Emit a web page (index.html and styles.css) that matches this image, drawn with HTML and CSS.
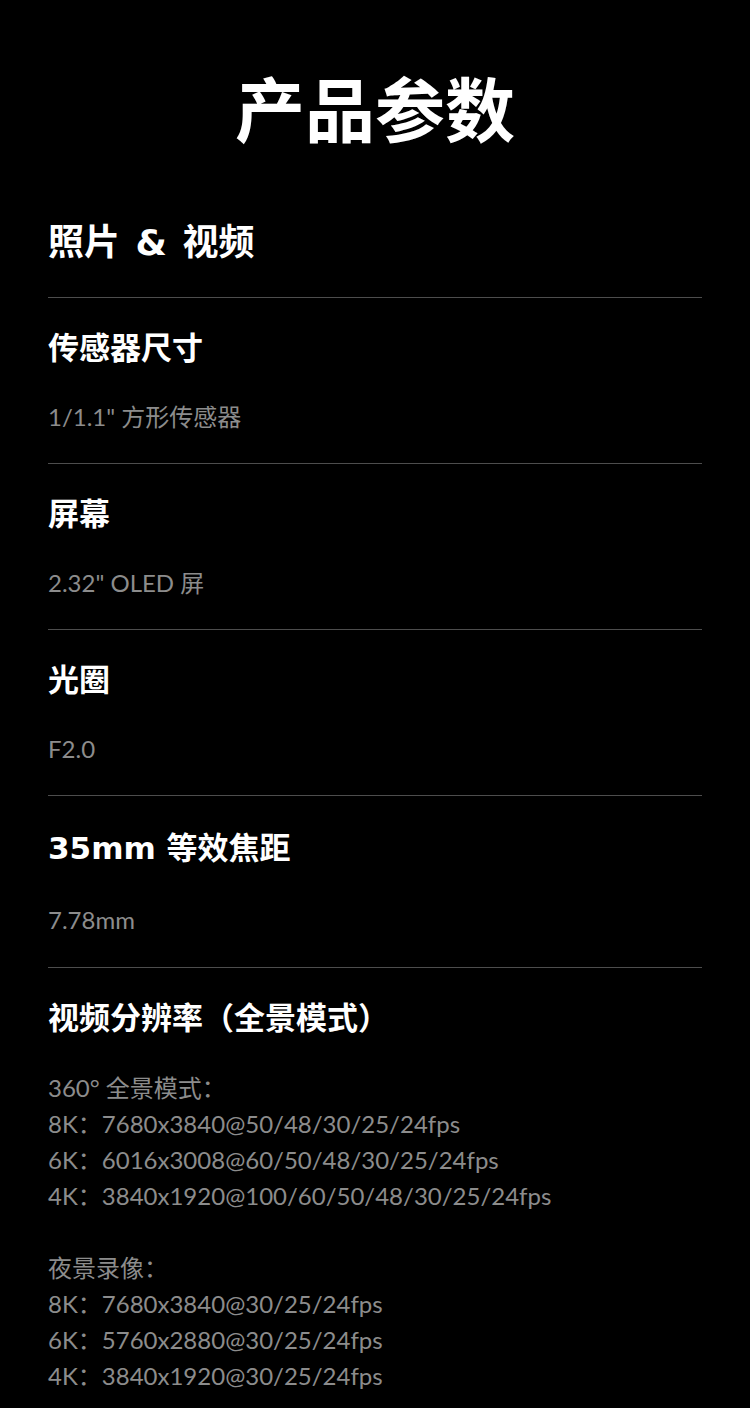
FILE: index.html
```html
<!DOCTYPE html>
<html lang="zh-CN">

<head>
  <meta charset="UTF-8">
  <meta name="viewport" content="width=device-width, initial-scale=1.0">
  <title>产品参数</title>
  <link rel="stylesheet" href="styles.css">
</head>

<body>
  <h1 class="page-title">产品参数</h1>

  <div class="specs">
    <h2 class="group-title">照片 &amp; 视频</h2>

    <div class="spec">
      <h3 class="spec-name">传感器尺寸</h3>
      <p class="spec-value">1/1.1" 方形传感器</p>
    </div>

    <div class="spec">
      <h3 class="spec-name">屏幕</h3>
      <p class="spec-value">2.32" OLED 屏</p>
    </div>

    <div class="spec">
      <h3 class="spec-name">光圈</h3>
      <p class="spec-value">F2.0</p>
    </div>

    <div class="spec spec-wide">
      <h3 class="spec-name">35mm 等效焦距</h3>
      <p class="spec-value">7.78mm</p>
    </div>

    <div class="spec spec-last">
      <h3 class="spec-name">视频分辨率（全景模式）</h3>
      <div class="spec-list">
        <p>360° 全景模式：</p>
        <p>8K：7680x3840@50/48/30/25/24fps</p>
        <p>6K：6016x3008@60/50/48/30/25/24fps</p>
        <p>4K：3840x1920@100/60/50/48/30/25/24fps</p>
      </div>
      <div class="spec-list">
        <p>夜景录像：</p>
        <p>8K：7680x3840@30/25/24fps</p>
        <p>6K：5760x2880@30/25/24fps</p>
        <p>4K：3840x1920@30/25/24fps</p>
      </div>
    </div>
  </div>
</body>

</html>
```

FILE: styles.css
```css
/* page */
body {
  margin: 0;
  padding: 0 48px;
  background-color: #000000;
  color: #ffffff;
  font-family: Lato, "Noto Sans CJK SC", sans-serif;
}

.page-title {
  margin: 60px 0 0;
  font-size: 70px;
  line-height: 100px;
  font-weight: 700;
  text-align: center;
}

.group-title,
.spec-name {
  font-family: "DejaVu Sans", "Noto Sans CJK SC", sans-serif;
  font-weight: 700;
}

.group-title {
  margin: 58px 0 0;
  font-size: 36px;
  line-height: 50px;
  word-spacing: 3px;
  padding-bottom: 29px;
}

.spec {
  border-top: 1px solid #4d4d4d;
  padding: 30px 0 31px;
}

.spec-name {
  margin: 0 0 34px;
  font-size: 31px;
  line-height: 40px;
}

.spec-wide {
  padding-top: 32px;
  padding-bottom: 32px;
}

.spec-wide .spec-name {
  margin-bottom: 37px;
}

.spec-value {
  margin: 0;
  font-size: 24px;
  line-height: 30px;
  color: #8c8c8c;
}

.spec-last .spec-name {
  margin-bottom: 32px;
}

.spec-list {
  font-size: 24px;
  line-height: 36px;
  color: #8c8c8c;
  margin-bottom: 36px;
}

.spec-list p {
  margin: 0;
}
```
